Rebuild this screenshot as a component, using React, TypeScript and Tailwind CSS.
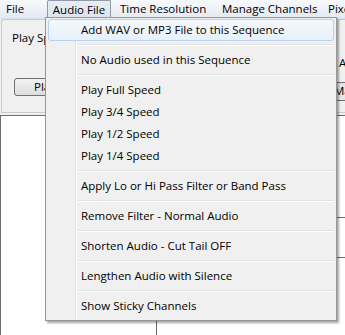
import React from "react";

const items: (string | null)[] = [
  "Add WAV or MP3 File to this Sequence",
  null,
  "No Audio used in this Sequence",
  null,
  "Play Full Speed",
  "Play 3/4 Speed",
  "Play 1/2 Speed",
  "Play 1/4 Speed",
  null,
  "Apply Lo or Hi Pass Filter or Band Pass",
  null,
  "Remove Filter - Normal Audio",
  null,
  "Shorten Audio - Cut Tail OFF",
  null,
  "Lengthen Audio with Silence",
  null,
  "Show Sticky Channels",
];

export default function App() {
  return (
    <div
      className="relative w-[345px] h-[335px] overflow-hidden bg-[#f0f0f0] text-black text-[11.5px] whitespace-nowrap"
      style={{ fontFamily: '"Open Sans", "Noto Sans", sans-serif' }}
    >
      {/* menu bar */}
      <div className="h-[19px] flex items-stretch bg-gradient-to-b from-[#f7f9fc] to-[#e4eaf2] border-b border-[#d8dfe8]">
        <div className="w-[47px] shrink-0 pl-[6px] flex items-center leading-none">File</div>
        <div className="w-[64px] shrink-0 flex items-center justify-center leading-none border border-b-0 border-[#8e9aa8] rounded-t-[2px] bg-gradient-to-b from-[#e9eef4] to-[#dbe3ec]">
          Audio File
        </div>
        <div className="w-[111px] shrink-0 pl-[9px] flex items-center leading-none">Time Resolution</div>
        <div className="w-[106px] shrink-0 flex items-center leading-none">Manage Channels</div>
        <div className="shrink-0 flex items-center leading-none">Pixel</div>
      </div>

      {/* top panel */}
      <div className="h-[94px] ml-[1px] border-l border-t border-b border-[#c9cdd2] rounded-tl-[3px] flex">
        <div className="w-[331px] shrink-0 relative">
          <div className="pl-[10px] pt-[12px] leading-none">Play Speed</div>
          <div className="mt-[34px] ml-[12px] w-[80px] h-[18px] border border-[#707070] rounded-[3px] bg-gradient-to-b from-[#f2f2f2] to-[#dddddd] flex items-center pl-[19px] leading-none">
            Play
          </div>
        </div>
        <div className="flex-1 flex flex-col">
          <div className="pl-[6px] mt-[37px] leading-none">All</div>
          <div className="mt-[13px] h-[19px] border-t border-b border-[#707070] bg-[#e6e6e6] flex items-center pl-[1px] leading-none">
            Manage
          </div>
        </div>
      </div>

      {/* bottom white area */}
      <div className="mt-[2px] h-[220px] bg-white border-t border-l border-[#6d6d6d] flex">
        <div className="w-[156px] border-r border-[#6d6d6d]"></div>
        <div className="flex-1 flex flex-col items-end">
          <div className="mt-[101px] w-[8px] border-t border-[#6d6d6d]"></div>
          <div className="mt-[39px] w-[8px] border-t border-[#6d6d6d]"></div>
        </div>
      </div>

      {/* dropdown */}
      <div className="absolute left-[45px] top-[17px] w-[292px] h-[304px] bg-[#f0f0f0] border border-[#979797] shadow-[2px_2px_2px_rgba(0,0,0,0.35)] p-[1px]">
        <div className="absolute left-[29px] top-[1px] bottom-[1px] w-[2px] border-l border-[#e2e3e3] bg-[#ffffff]"></div>
        <div className="relative flex flex-col">
          {items.map((it, i) =>
            it === null ? (
              <div key={i} className="h-[8px] flex items-center pl-[31px] pr-[1px]">
                <div className="w-full h-[2px] border-t border-[#e0e0e0] bg-white"></div>
              </div>
            ) : i === 0 ? (
              <div
                key={i}
                className="h-[22px] mx-[1px] flex items-center pl-[32px] rounded-[3px] border border-[#b4d0f2] bg-gradient-to-b from-[#f4f8fd] to-[#e8f0fa] leading-none"
              >
                {it}
              </div>
            ) : (
              <div key={i} className="h-[22px] flex items-center pl-[34px] leading-none">
                {it}
              </div>
            )
          )}
        </div>
      </div>
    </div>
  );
}
